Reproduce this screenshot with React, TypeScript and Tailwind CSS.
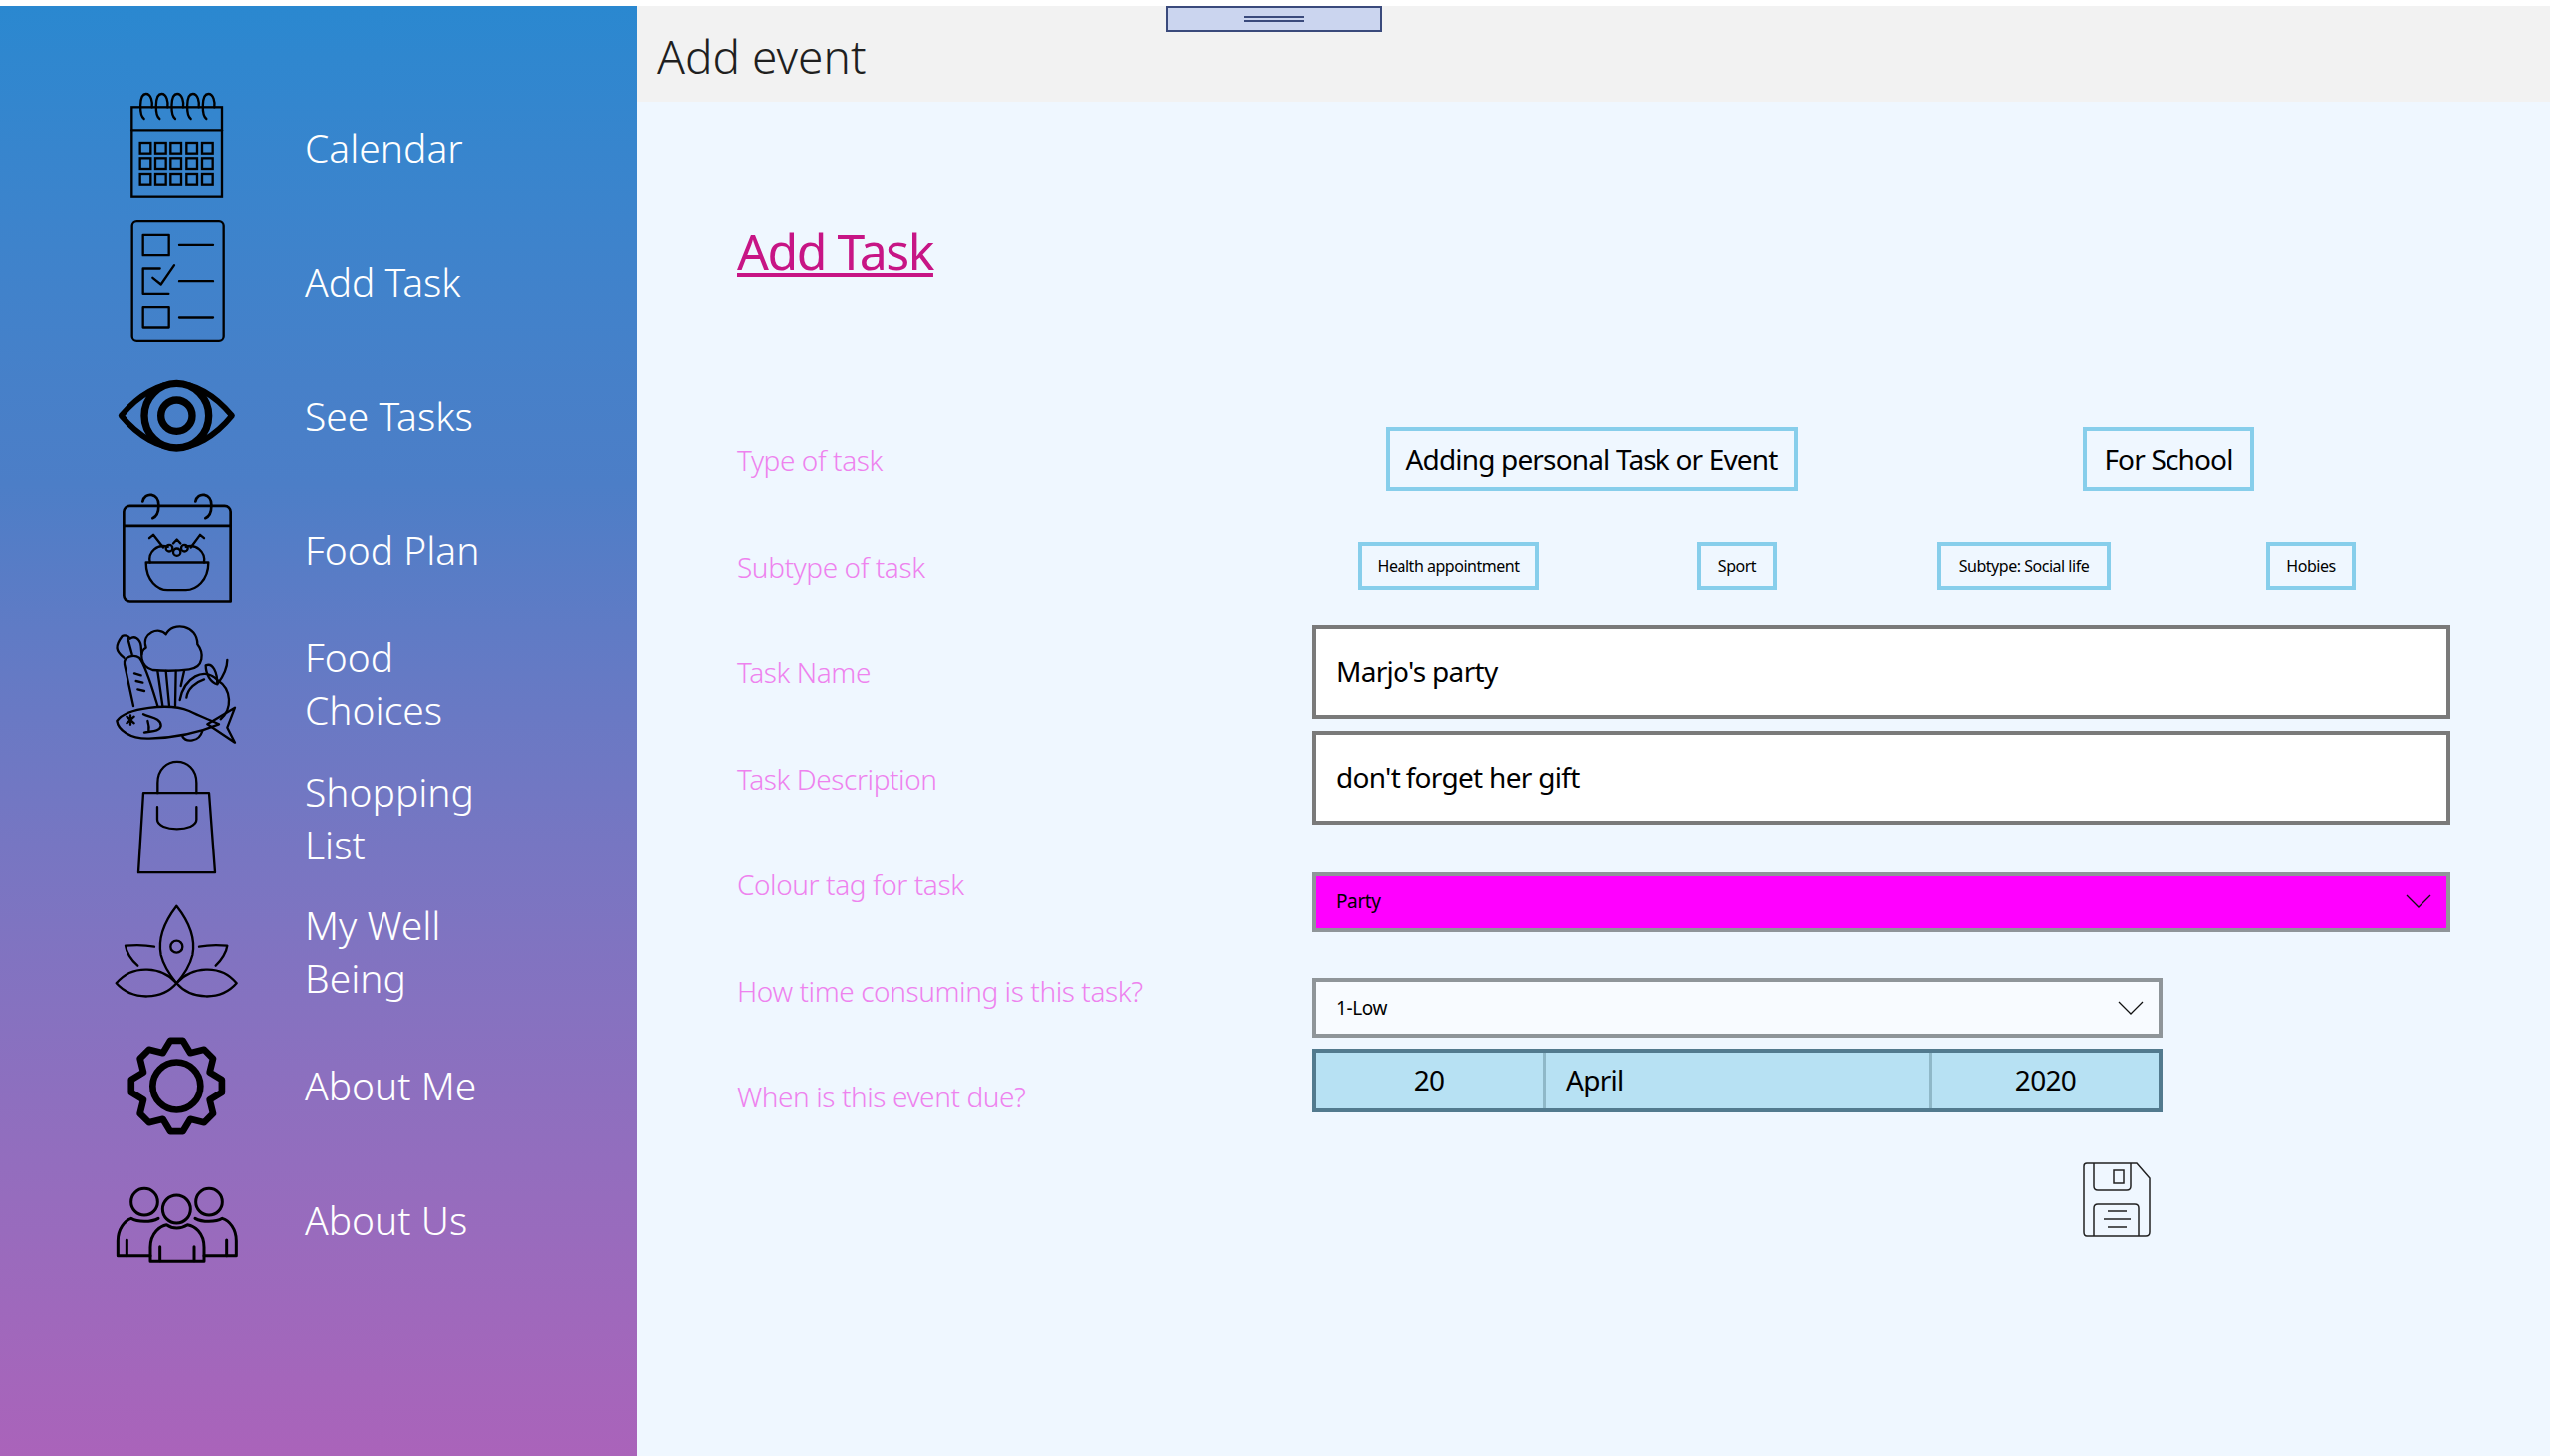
const font = "font-['Noto_Sans',sans-serif]";

function Slot(props: { y: number; children: React.ReactNode }) {
  return (
    <svg
      width={134}
      height={134}
      viewBox={`60 ${props.y} 402 402`}
      fill="none"
      stroke="#000"
      strokeWidth={7}
      strokeLinecap="round"
      strokeLinejoin="round"
      className="shrink-0 overflow-visible"
    >
      {props.children}
    </svg>
  );
}

function CalendarIcon() {
  const xs = [152, 198, 244, 292, 339];
  const ys = [435, 481, 528];
  return (
    <Slot y={249}>
      <rect x="127" y="325" width="272" height="271" strokeLinejoin="miter" />
      <path d="M127 397H399" />
      {ys.map((y) =>
        xs.map((x) => <rect key={`${x}-${y}`} x={x} y={y} width="32" height="32" strokeLinejoin="miter" />)
      )}
      {[170, 217, 264, 311, 358].map((x) => (
        <path key={x} d={`M${x - 6} 360C${x - 20} 350 ${x - 22} 285 ${x} 285C${x + 16} 285 ${x + 20} 310 ${x + 18} 325`} />
      ))}
    </Slot>
  );
}

function TaskIcon() {
  return (
    <Slot y={652.5}>
      <rect x="128" y="668" width="276" height="359" rx="14" />
      <rect x="161" y="709" width="78" height="61" />
      <rect x="161" y="926" width="78" height="61" />
      <path d="M212 810H161V886H238" />
      <path d="M190 838L215 858L255 800" />
      <path d="M270 739H372M270 848H372M270 957H372" />
    </Slot>
  );
}

function EyeIcon() {
  return (
    <Slot y={1056}>
      <path strokeWidth={17} d="M95 1256C150 1190 210 1160 262 1160C315 1160 375 1190 429 1256C375 1322 315 1352 262 1352C210 1352 150 1322 95 1256Z" />
      <circle cx="262" cy="1256" r="97" strokeWidth={22} />
      <circle cx="262" cy="1256" r="47" strokeWidth={22} />
    </Slot>
  );
}

function FoodPlanIcon() {
  return (
    <Slot y={19.5}>
      <g strokeWidth={8}>
        <path d="M121 85H407C417 85 425 93 425 103V372H121C111 372 103 364 103 354V103C103 93 111 85 121 85Z" />
        <path d="M103 145H425" />
        <path d="M160 72C165 42 210 45 208 85C208 105 200 118 190 122" />
        <path d="M319 72C324 42 369 45 367 85C367 105 359 118 349 122" />
      </g>
      <path d="M170 255H358C358 310 320 338 290 338H235C205 338 170 310 170 255Z" />
      <path d="M182 255C175 222 205 198 236 208M345 255C350 222 320 198 290 208" />
      <path d="M180 182L192 172L222 210M345 182L333 172L305 210" />
      <circle cx="240" cy="212" r="10" />
      <circle cx="286" cy="212" r="10" />
      <circle cx="263" cy="224" r="11" />
      <path d="M252 198L263 186L274 198" />
    </Slot>
  );
}

function FoodIcon() {
  return (
    <Slot y={423}>
      <path d="M105 565C100 540 135 535 150 545C170 570 190 640 205 690M105 565L132 690" />
      <path d="M103 545C78 525 75 510 98 480C105 475 118 480 122 488C135 478 152 488 155 510L157 535" />
      <path d="M115 487L128 535" />
      <path d="M190 582C150 570 150 525 170 515C155 470 210 450 230 475C250 435 325 445 325 505C345 530 345 575 300 580C265 585 225 585 190 582Z" />
      <path d="M205 585L220 690M230 585L240 690M260 585L258 690M285 585L275 630" />
      <path d="M272 672C285 605 345 570 385 612C430 640 430 700 395 730" />
      <path d="M292 665C295 638 320 618 345 610" />
      <path d="M350 568C372 558 385 590 385 625C365 620 350 595 350 568ZM415 552C415 580 400 605 385 625" />
      <path d="M82 735C110 695 240 680 300 705C330 720 370 735 390 745C330 770 270 785 180 788C120 790 85 760 82 735Z" />
      <path d="M355 745L438 695L415 755L438 800L355 745Z" />
      <path d="M162 715C180 725 215 725 215 750C210 770 180 765 165 770M175 735C178 745 180 755 178 765" />
      <path d="M112 722L134 742M134 722L112 742M123 718V746" />
      <path d="M135 592L155 598M140 615L160 620M145 640L165 645" />
      <path d="M280 782C290 800 330 800 340 765" />
    </Slot>
  );
}

function BagIcon() {
  return (
    <Slot y={826.5}>
      <path d="M162 950H360L378 1190H147Z" />
      <path d="M205 950V920C205 835 322 835 322 920V950" />
      <path d="M204 992V1030C204 1068 322 1068 322 1030V992" />
    </Slot>
  );
}

function LotusIcon() {
  return (
    <Slot y={-210}>
      <path d="M262 -148C225 -100 205 -50 215 0C225 40 250 70 262 85C275 70 300 40 310 0C320 -50 300 -100 262 -148Z" />
      <circle cx="262" cy="-25" r="18" />
      <path d="M262 85C220 35 130 25 80 85C130 140 220 135 262 85C305 35 395 25 443 85C395 140 305 135 262 85Z" />
      <path d="M195 -25C170 -30 130 -30 108 -28C110 -10 125 15 145 32M330 -25C355 -30 395 -30 415 -28C413 -10 398 15 380 32" />
    </Slot>
  );
}

function gearPath(cx: number, cy: number) {
  const points: string[] = [];
  for (let i = 0; i < 8; i++) {
    const a = ((-90 + i * 45) * Math.PI) / 180;
    const step = Math.PI / 180;
    const at = (deg: number, r: number) =>
      `${(cx + Math.cos(a + deg * step) * r).toFixed(1)} ${(cy + Math.sin(a + deg * step) * r).toFixed(1)}`;
    points.push(`${at(-22.5, 108)}L${at(-8, 138)}L${at(8, 138)}`);
  }
  return `M${points.join("L")}Z`;
}

function GearIcon() {
  return (
    <Slot y={193.5}>
      <path strokeWidth={20} d={gearPath(262, 393)} />
      <circle cx="262" cy="393" r="72" strokeWidth={20} />
    </Slot>
  );
}

function PeopleIcon() {
  return (
    <Slot y={597}>
      <g strokeWidth={9}>
        <circle cx="165" cy="743" r="40" />
        <circle cx="360" cy="743" r="40" />
        <circle cx="262" cy="765" r="42" />
        <path d="M183 922V880C183 835 215 815 232 812C250 825 275 825 295 812C315 815 345 835 345 880V922Z" />
        <path d="M212 878V920M315 878V920" />
        <path d="M183 905H85V860C85 825 105 800 125 793C145 805 185 805 207 793" />
        <path d="M345 905H442V860C442 825 422 800 400 793C380 805 340 805 318 793" />
        <path d="M112 858V905M413 858V905" />
      </g>
    </Slot>
  );
}

const navItems = [
  { icon: <CalendarIcon />, label: ["Calendar"] },
  { icon: <TaskIcon />, label: ["Add Task"] },
  { icon: <EyeIcon />, label: ["See Tasks"] },
  { icon: <FoodPlanIcon />, label: ["Food Plan"] },
  { icon: <FoodIcon />, label: ["Food", "Choices"] },
  { icon: <BagIcon />, label: ["Shopping", "List"] },
  { icon: <LotusIcon />, label: ["My Well", "Being"] },
  { icon: <GearIcon />, label: ["About Me"] },
  { icon: <PeopleIcon />, label: ["About Us"] },
];

const labels = [
  "Type of task",
  "Subtype of task",
  "Task Name",
  "Task Description",
  "Colour tag for task",
  "How time consuming is this task?",
  "When is this event due?",
];

function Sidebar() {
  return (
    <nav className="w-[640px] shrink-0 pt-[76px] bg-gradient-to-b from-[#2a88d0] via-[#4c7ec7] via-33% to-[#aa63ba]">
      {navItems.map((item) => (
        <div key={item.label[0]} className="flex items-center h-[134.5px] pl-[110px]">
          {item.icon}
          <div className="ml-[62px] pb-[2px] text-[39px] leading-[53px] font-light text-white">
            {item.label.map((line) => (
              <div key={line}>{line}</div>
            ))}
          </div>
        </div>
      ))}
    </nav>
  );
}

function Chevron() {
  return (
    <svg width="26" height="14" viewBox="0 0 26 14" fill="none" stroke="#111" strokeWidth="1.3">
      <path d="M1 1L13 13L25 1" />
    </svg>
  );
}

function TypeButton(props: { label: string; className: string }) {
  return (
    <button className={`flex items-center justify-center whitespace-nowrap border-4 border-[#87ceeb] text-black ${props.className}`}>
      {props.label}
    </button>
  );
}

function SaveIcon() {
  return (
    <svg width="68" height="75" viewBox="0 0 68 75" fill="none" stroke="#222" strokeWidth="1.5" className="ml-[774px] mt-[50px]">
      <path d="M4 1H54L67 16V70C67 73 66 74 63 74H4C2 74 1 73 1 70V4C1 2 2 1 4 1Z" />
      <path d="M11 1V24C11 27 12 28 15 28H44C47 28 48 27 48 24V1" />
      <rect x="31" y="8" width="10" height="13" />
      <path d="M11 74V46C11 43 12 42 15 42H52C55 42 56 43 56 46V74" />
      <path d="M25 49H44M21 57H48M25 65H44" />
    </svg>
  );
}

export default function App() {
  return (
    <div className={`flex w-[2560px] h-[1462px] pt-[6px] bg-white overflow-hidden ${font}`}>
      <Sidebar />
      <main className="flex-1 flex flex-col bg-[#eff7ff]">
        <header className="relative h-[96px] shrink-0 bg-[#f2f2f2] pl-[20px] pt-[5px] flex items-center">
          <h1 className="text-[46px] font-light text-[#1f1f1f]">Add event</h1>
          <div className="absolute top-0 left-[531px] w-[216px] h-[26px] border-2 border-[#3a4a7c] bg-[#cbd5ef] flex flex-col items-center justify-center gap-[2px]">
            <span className="w-[60px] h-[2px] bg-[#3a4a7c]" />
            <span className="w-[60px] h-[2px] bg-[#3a4a7c]" />
          </div>
        </header>
        <div className="pl-[100px]">
          <h2 className="h-[60px] mt-[120px] mb-[128px] text-[50px] leading-[60px] tracking-[-0.03em] text-[#c71585] underline decoration-[4px] underline-offset-[3px]">
            Add Task
          </h2>
          <div className="flex">
            <div className="w-[577px] shrink-0 -mt-px">
              {labels.map((label) => (
                <div key={label} className="flex items-center h-[106.5px] text-[28px] tracking-[-0.015em] font-light text-[#ee82ee]">
                  {label}
                </div>
              ))}
            </div>
            <div className="w-[1143px]">
              <div className="flex mt-[19px] text-[28px] tracking-[-0.03em]">
                <TypeButton label="Adding personal Task or Event" className="ml-[74px] w-[414px] h-[64px]" />
                <TypeButton label="For School" className="ml-[286px] w-[172px] h-[64px]" />
              </div>
              <div className="flex mt-[51px] text-[16px] tracking-[-0.03em]">
                <TypeButton label="Health appointment" className="ml-[46px] w-[182px] h-[48px]" />
                <TypeButton label="Sport" className="ml-[159px] w-[80px] h-[48px]" />
                <TypeButton label="Subtype: Social life" className="ml-[161px] w-[174px] h-[48px]" />
                <TypeButton label="Hobies" className="ml-[156px] w-[90px] h-[48px]" />
              </div>
              <div className="flex items-center mt-[36px] h-[94px] px-[20px] pb-[3px] border-4 border-[#7a7a7a] bg-white text-[28px] tracking-[-0.025em] text-black">
                Marjo's party
              </div>
              <div className="flex items-center mt-[12px] h-[94px] px-[20px] pb-[3px] border-4 border-[#7a7a7a] bg-white text-[28px] tracking-[-0.025em] text-black">
                don't forget her gift
              </div>
              <div className="flex items-center justify-between mt-[48px] h-[60px] pl-[20px] pr-[15px] pb-[2px] border-4 border-[#8f9599] bg-[#ff00ff] text-[19px] tracking-[-0.02em] text-black">
                <span>Party</span>
                <Chevron />
              </div>
              <div className="flex items-center justify-between w-[854px] mt-[46px] h-[60px] pl-[20px] pr-[15px] border-4 border-[#8f9599] bg-[#f8fbff] text-[19px] tracking-[-0.02em] text-black">
                <span>1-Low</span>
                <Chevron />
              </div>
              <div className="flex w-[854px] mt-[11px] h-[64px] border-4 border-[#527a8e] bg-[#b7e1f3] text-[28px] tracking-[-0.025em] text-black">
                <div className="flex items-center justify-center w-[228px] pb-[3px]">20</div>
                <div className="flex items-center w-[391px] px-[20px] pb-[3px] border-x-[3px] border-[#8fb8c8]">April</div>
                <div className="flex flex-1 items-center justify-center pb-[3px]">2020</div>
              </div>
              <SaveIcon />
            </div>
          </div>
        </div>
      </main>
    </div>
  );
}
